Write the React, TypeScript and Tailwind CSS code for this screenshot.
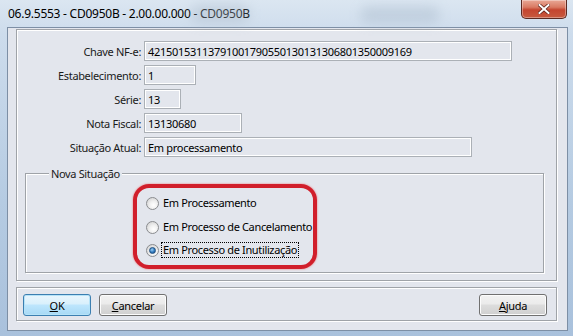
import React from "react";

const font = "font-['Noto_Sans',sans-serif]";

function Field({ w, value }: { w: string; value: string }) {
  return (
    <div
      className={`${w} h-[20px] border border-[#abb0b6] bg-[#e3e6ed] shadow-[inset_1px_1px_0_#fff,inset_-1px_-1px_0_#fff] flex items-center pl-[3px] text-[11px] tracking-[-0.3px] text-black leading-none whitespace-nowrap overflow-hidden`}
    >
      {value}
    </div>
  );
}

function Row({ label, w, value }: { label: string; w: string; value: string }) {
  return (
    <div className="flex items-center h-[20px]">
      <div className="w-[124px] text-right text-[11px] tracking-[-0.35px] text-[#1a1a1a] leading-none whitespace-nowrap">{label}</div>
      <div className="w-[3px]" />
      <Field w={w} value={value} />
    </div>
  );
}

function Radio({ checked }: { checked?: boolean }) {
  return (
    <div className="w-[13px] h-[13px] rounded-full border border-[#8a8c8f] bg-[radial-gradient(circle_at_60%_65%,#ffffff_0%,#f0f0f0_40%,#c9c9c9_100%)] flex items-center justify-center shrink-0">
      {checked && (
        <div className="w-[7px] h-[7px] rounded-full bg-[radial-gradient(circle_at_40%_35%,#9fd1f5_0%,#2f79bf_55%,#1b4f86_100%)] border border-[#1f4f80]" />
      )}
    </div>
  );
}

function Btn({ children, def, w }: { children: React.ReactNode; def?: boolean; w: string }) {
  return (
    <div
      className={`${w} h-[22px] rounded-[3px] border flex items-center justify-center text-[11px] tracking-[-0.3px] text-black leading-none ${
        def
          ? "border-[#3c7fb1] bg-[linear-gradient(#eaf6fd_0%,#d9f0fc_45%,#bee6fd_50%,#a7d9f5_100%)] shadow-[inset_0_0_0_1px_#b6e3f8]"
          : "border-[#707070] bg-[linear-gradient(#f2f2f2_0%,#ebebeb_45%,#dddddd_50%,#cfcfcf_100%)] shadow-[inset_0_0_0_1px_#fcfcfc]"
      }`}
    >
      {children}
    </div>
  );
}

export default function App() {
  return (
    <div
      className={`${font} relative w-[573px] h-[336px] overflow-hidden bg-[linear-gradient(180deg,#dbe6f1_0%,#cddcec_10%,#b5cbe2_60%,#a9c1dc_100%)]`}
    >
      {/* glass streaks */}
      <div className="absolute left-[190px] top-[4px] w-[60px] h-[20px] rounded-full bg-[#aab9c9] opacity-40 blur-[6px]" />
      <div className="absolute left-[360px] top-[6px] w-[80px] h-[18px] rounded-full bg-[#a5b6c8] opacity-40 blur-[6px]" />

      {/* title bar */}
      <div className="h-[27px] flex items-center pl-[8px] text-[12px] tracking-[-0.25px] text-black leading-none">
        06.9.5553 - CD0950B - 2.00.00.000 - CD0950B
      </div>

      {/* close button */}
      <div className="absolute left-[521px] top-0 w-[46px] h-[19px] rounded-b-[5px] border border-t-0 border-[#5b2a22] bg-[linear-gradient(#e9a896_0%,#d97a63_40%,#c4452f_55%,#c75a3f_100%)] shadow-[inset_0_0_0_1px_rgba(255,255,255,0.35)] flex items-center justify-center">
        <svg width="12" height="10" viewBox="0 0 12 10">
          <path d="M1.5 1 L10.5 9 M10.5 1 L1.5 9" stroke="#5a2018" strokeWidth="3.4" strokeLinecap="square" />
          <path d="M1.5 1 L10.5 9 M10.5 1 L1.5 9" stroke="#ffffff" strokeWidth="2" strokeLinecap="square" />
        </svg>
      </div>

      {/* client area */}
      <div className="ml-[7px] mr-[5px] h-[304px] border border-[#7d8fa5] bg-[#e3e6ed] pl-[8px] pr-[10px] pt-[1px]">
        {/* top panel */}
        <div className="h-[252px] border border-[#9fa3a8] shadow-[inset_1px_1px_0_#fff,1px_1px_0_#fff] pt-[11px]">
          <div className="flex flex-col gap-[4px]">
            <Row label="Chave NF-e:" w="w-[368px]" value="42150153113791001790550130131306801350009169" />
            <Row label="Estabelecimento:" w="w-[52px]" value="1" />
            <Row label="Série:" w="w-[37px]" value="13" />
            <Row label="Nota Fiscal:" w="w-[98px]" value="13130680" />
            <Row label="Situação Atual:" w="w-[328px]" value="Em processamento" />
          </div>

          {/* group box */}
          <div className="relative ml-[8px] mr-[12px] mt-[16px] h-[100px] border border-[#9fa3a8] shadow-[inset_1px_1px_0_#fff,1px_1px_0_#fff] pl-[120px] pt-[21px]">
            <div className="absolute left-[23px] top-[-8px] px-[2px] bg-[#e3e6ed] text-[11px] tracking-[-0.35px] text-[#1a1a1a] leading-[15px]">
              Nova Situação
            </div>
            <div className="flex items-center h-[16px] gap-[2px] text-[11px] tracking-[-0.35px] text-black">
              <Radio />
              <span className="px-[1px] border border-transparent leading-[14px]">Em Processamento</span>
            </div>
            <div className="flex items-center h-[16px] gap-[2px] mt-[8px] text-[11px] tracking-[-0.35px] text-black">
              <Radio />
              <span className="px-[1px] border border-transparent leading-[14px]">Em Processo de Cancelamento</span>
            </div>
            <div className="flex items-center h-[16px] gap-[2px] mt-[7px] text-[11px] tracking-[-0.35px] text-black">
              <Radio checked />
              <span className="px-[1px] border border-dotted border-black leading-[14px]">Em Processo de Inutilização</span>
            </div>
          </div>
        </div>

        {/* button panel */}
        <div className="mt-[6px] h-[34px] border border-[#9fa3a8] shadow-[inset_1px_1px_0_#fff,1px_1px_0_#fff] flex items-start pt-[6px] pl-[6px] pr-[9px]">
          <Btn def w="w-[68px]">
            <span><u>O</u>K</span>
          </Btn>
          <div className="w-[8px]" />
          <Btn w="w-[68px]">
            <span><u>C</u>ancelar</span>
          </Btn>
          <div className="flex-1" />
          <Btn w="w-[68px]">
            <span><u>A</u>juda</span>
          </Btn>
        </div>
      </div>

      {/* red annotation */}
      <div className="absolute left-[133px] top-[184px] w-[184px] h-[85px] rounded-[16px] border-[4px] border-[#d11f2b] shadow-[0_0_2px_#e66]" />
    </div>
  );
}
